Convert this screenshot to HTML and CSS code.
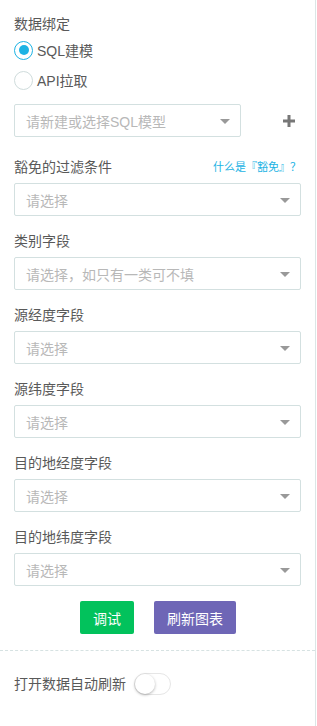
FILE: index.html
```html
<!DOCTYPE html>
<html lang="zh">
<head>
<meta charset="utf-8">
<link rel="stylesheet" href="styles.css">
</head>
<body>
<div class="panel">
  <div class="title">数据绑定</div>
  <label class="radio checked"><span class="dot"></span><span>SQL建模</span></label>
  <label class="radio"><span class="dot"></span><span>API拉取</span></label>

  <div class="model-row">
    <div class="select model"><span class="ph">请新建或选择SQL模型</span><span class="caret"></span></div>
    <svg class="plus" width="12" height="12" viewBox="0 0 12 12"><rect x="4.5" y="0" width="3" height="12" fill="#777"/><rect x="0" y="4.5" width="12" height="3" fill="#777"/></svg>
  </div>

  <div class="field first">
    <div class="label-row"><span class="label">豁免的过滤条件</span><a class="link">什么是『豁免』？</a></div>
    <div class="select"><span class="ph">请选择</span><span class="caret"></span></div>
  </div>
  <div class="field">
    <div class="label-row"><span class="label">类别字段</span></div>
    <div class="select"><span class="ph">请选择，如只有一类可不填</span><span class="caret"></span></div>
  </div>
  <div class="field">
    <div class="label-row"><span class="label">源经度字段</span></div>
    <div class="select"><span class="ph">请选择</span><span class="caret"></span></div>
  </div>
  <div class="field">
    <div class="label-row"><span class="label">源纬度字段</span></div>
    <div class="select"><span class="ph">请选择</span><span class="caret"></span></div>
  </div>
  <div class="field">
    <div class="label-row"><span class="label">目的地经度字段</span></div>
    <div class="select"><span class="ph">请选择</span><span class="caret"></span></div>
  </div>
  <div class="field">
    <div class="label-row"><span class="label">目的地纬度字段</span></div>
    <div class="select"><span class="ph">请选择</span><span class="caret"></span></div>
  </div>

  <div class="buttons">
    <button class="btn green">调试</button>
    <button class="btn purple">刷新图表</button>
  </div>

  <div class="auto-row">
    <span class="label">打开数据自动刷新</span>
    <span class="toggle"><span class="knob"></span></span>
  </div>
</div>
</body>
</html>
```

FILE: styles.css
```css
html, body {
  margin: 0;
  padding: 0;
  background: #fff;
}
body {
  font-family: "Liberation Sans", "Noto Sans CJK SC", sans-serif;
  font-size: 14px;
  color: #595959;
}
.panel {
  width: 316px;
  height: 726px;
  box-sizing: border-box;
  border-right: 1px solid #dce6e6;
  overflow: hidden;
}
.title {
  margin: 14px 0 0 14px;
  height: 20px;
  line-height: 20px;
}
.radio {
  display: flex;
  align-items: center;
  height: 30px;
  padding-left: 14px;
  gap: 4px;
}
.radio:first-of-type { margin-top: 1px; }
.radio .dot {
  width: 19px;
  height: 19px;
  box-sizing: border-box;
  border: 1px solid #cfdcdc;
  border-radius: 50%;
  display: flex;
  align-items: center;
  justify-content: center;
}
.radio.checked .dot {
  border: 1.5px solid #1cb3e4;
}
.radio.checked .dot::after {
  content: "";
  width: 10px;
  height: 10px;
  border-radius: 50%;
  background: #1cb3e4;
}
.model-row {
  display: flex;
  align-items: center;
  margin-top: 9px;
  padding-left: 14px;
}
.select {
  height: 33px;
  box-sizing: border-box;
  border: 1px solid #d3e0e0;
  border-radius: 2px;
  display: flex;
  align-items: center;
  justify-content: space-between;
  padding: 0 10px 0 11px;
  width: 287px;
}
.select.model { width: 227px; }
.ph {
  color: #b8b8b8;
  font-size: 14px;
}
.caret {
  width: 0;
  height: 0;
  border-left: 5px solid transparent;
  border-right: 5px solid transparent;
  border-top: 5px solid #999;
  margin-top: 2px;
}
.plus { margin-left: 42px; }
.field {
  padding-left: 14px;
  margin-top: 15px;
}
.field.first { margin-top: 20px; }
.label-row {
  display: flex;
  justify-content: space-between;
  align-items: center;
  height: 20px;
  line-height: 20px;
  margin-bottom: 6px;
  width: 287px;
}
.link {
  color: #1cb3e4;
  font-size: 11px;
}
.buttons {
  display: flex;
  justify-content: center;
  gap: 20px;
  margin-top: 15px;
  padding-left: 1px;
}
.btn {
  height: 33px;
  border: none;
  border-radius: 2px;
  color: #fff;
  font-family: inherit;
  font-size: 14px;
  padding: 0;
}
.btn.green { background: #02c25c; width: 54px; }
.btn.purple { background: #6e66b6; width: 82px; }
.auto-row {
  margin-top: 16px;
  border-top: 1px dashed #d6e2e2;
  display: flex;
  align-items: center;
  padding: 22px 0 0 14px;
  gap: 8px;
}
.auto-row .label { line-height: 22px; }
.toggle {
  width: 37px;
  height: 22px;
  box-sizing: border-box;
  border: 1px solid #e6e6e6;
  border-radius: 11px;
  display: flex;
  align-items: center;
}
.knob {
  width: 20px;
  height: 20px;
  border-radius: 50%;
  background: #fff;
  box-shadow: 0 1px 3px rgba(0,0,0,0.3);
}
```
